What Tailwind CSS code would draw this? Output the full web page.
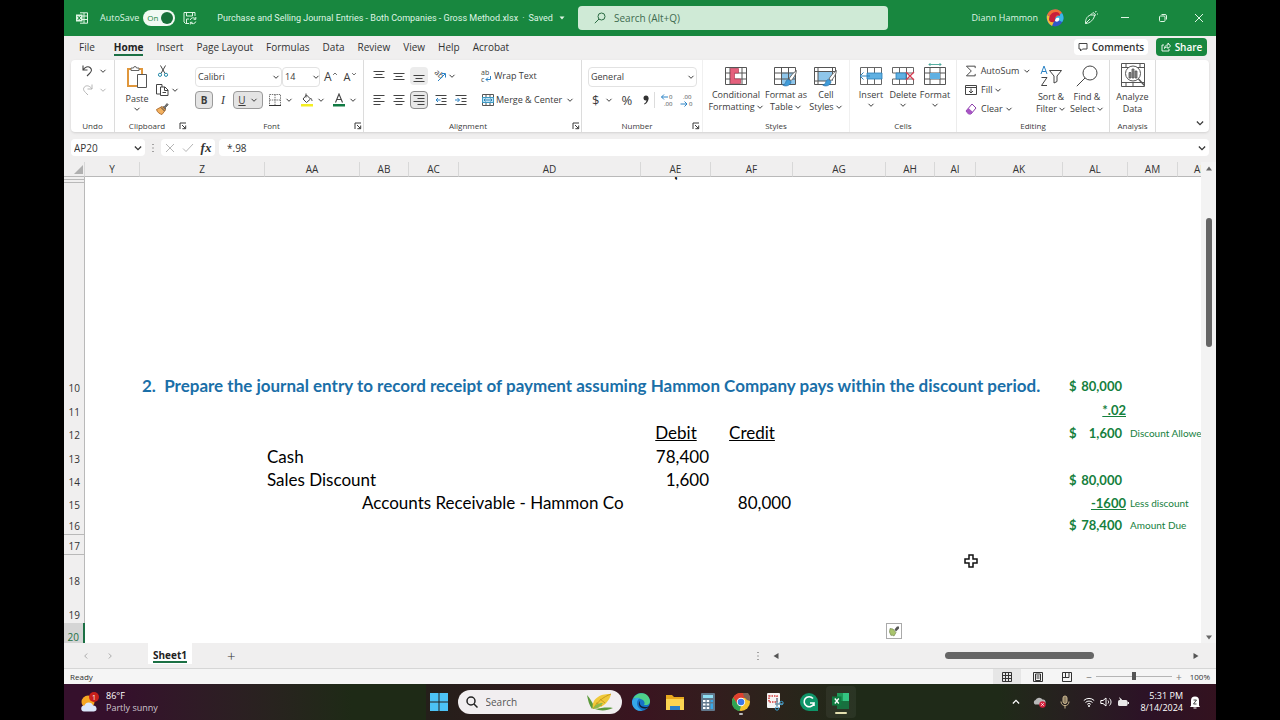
<!DOCTYPE html>
<html lang="en">
  <head>
    <meta charset="UTF-8" />
    <meta name="viewport" content="width=device-width, initial-scale=1.0" />
    <title>Purchase and Selling Journal Entries</title>
    <script src="https://cdn.jsdelivr.net/npm/@tailwindcss/browser@4"></script>
  </head>
  <body class="bg-black h-screen overflow-hidden font-['Open_Sans',sans-serif] text-[10px] leading-3 text-[#333]">
    <!-- Shared icons -->
    <svg class="hidden">
      <symbol id="chev" viewBox="0 0 8 8"><path d="M1.500 2.800 4 5.300 6.500 2.800" fill="none" stroke="currentColor" stroke-width="1" /></symbol>
      <symbol id="launch" viewBox="0 0 8 8"><path d="M1 7V1h6M3 3l3.500 3.500M6.700 3.500v3.200H3.400" fill="none" stroke="currentColor" stroke-width="1" /></symbol>
      <symbol id="brush" viewBox="0 0 14 16"><path d="M13.500.5c-3 2-6 6-7 8l2 1.500c2-2 5-6 5-9.500z" fill="#fff" stroke="#555" stroke-width=".8" /><path d="M6.200 9c-2 0-2.500 1.500-3 3C2.700 13.500 1.500 14 .5 14c2 1.800 7 1.500 8-3z" fill="#3f9bd8" stroke="#2a6fa8" stroke-width=".6" /></symbol>
    </svg>

    <div class="mx-auto w-[90%] h-full flex flex-col bg-[#f0efef]">
      <!-- Title bar -->
      <header class="h-9 shrink-0 flex items-center bg-[#18873f] text-[#dff5e4] text-[9px]">
        <div class="w-[514px] shrink-0 flex items-center pl-3">
          <svg class="w-3 h-3" viewBox="0 0 12 12" fill="none" stroke="#dff5e4">
            <path d="M4 .8h7.500v10.400H4M4 4h7.500M4 7.500h7.500M8 1v10" />
            <path d="M0 2.500h6.500v7H0z" fill="#dff5e4" stroke="none" />
            <path d="m1.700 4 3 4M4.700 4l-3 4" stroke="#18873f" />
          </svg>
          <label for="autosave" class="ml-3">AutoSave</label>
          <span class="relative ml-1 w-8 h-4 flex items-center">
            <input id="autosave" type="checkbox" checked class="appearance-none w-8 h-4 rounded-full bg-[#f1faf3]" />
            <span class="absolute left-1 text-[8px] text-[#18873f] pointer-events-none">On</span>
            <span class="absolute right-0.5 w-3 h-3 rounded-full bg-[#18703a] pointer-events-none"></span>
          </span>
          <button class="ml-2" aria-label="Save">
            <svg class="w-3.5 h-3.5" viewBox="0 0 14 14" fill="none" stroke="#dff5e4">
              <path d="M6 12.500H2.500l-1.500-1.500V1.500h11V5M3.500 1.500V5h6V1.500M3.500 12.500V8H6" />
              <path d="M7.200 9a3 3 0 0 1 5.300-1M12.800 6v2.300h-2.200M12.800 10.500a3 3 0 0 1-5.300 1M7.300 13.500v-2.200h2.200" />
            </svg>
          </button>
          <span class="ml-5 whitespace-nowrap font-['Roboto',sans-serif]">Purchase and Selling Journal Entries - Both Companies - Gross Method.xlsx</span>
          <button class="ml-1 flex items-center whitespace-nowrap font-['Roboto',sans-serif]">
            <span class="mr-1">·</span> Saved
            <svg class="w-1.5 h-1.5 ml-1.5" viewBox="0 0 6 6"><path d="M.5 1.500h5L3 4.500z" fill="#dff5e4" /></svg>
          </button>
        </div>
        <label class="w-[310px] shrink-0 h-6 rounded-sm bg-[#cfead6] flex items-center px-4 gap-2">
          <svg class="w-3 h-3" viewBox="0 0 12 12" fill="none" stroke="#2b6b43"><circle cx="7.500" cy="4.500" r="3.500" /><path d="M5 7 .8 11.200" /></svg>
          <input type="text" aria-label="Search" placeholder="Search (Alt+Q)" class="flex-1 bg-transparent outline-none text-[10px] placeholder:text-[#3f6b50]" />
        </label>
        <div class="flex-1 flex items-center justify-end pr-3">
          <span class="whitespace-nowrap">Diann Hammon</span>
          <svg class="w-[18px] h-[18px] ml-2" viewBox="0 0 18 18">
            <circle cx="9" cy="9" r="8.500" fill="#3157c8" />
            <path d="M1 6A8.500 8.500 0 0 1 16 4L9 9z" fill="#f0703a" />
            <path d="M1 6c-1 4 1 9 5 11l3-7z" fill="#f2c037" />
            <path d="M9 9 16 4c2 3 2 7 0 9z" fill="#39b7e8" />
            <path d="M3 11c0-5 3-8 7-8 3 0 4 2 4 4-3-2-5 0-5 4 0 3-5 3-6 0z" fill="#c8203c" />
            <path d="M9 12c0-3 2-4 4-3 1 2-1 5-4 3z" fill="#fff" />
          </svg>
          <button class="ml-5" aria-label="Ink">
            <svg class="w-3.5 h-3.5" viewBox="0 0 14 14" fill="none" stroke="#dff5e4"><path d="M1.500 12.500c0-4 1-7 5-8.500h4c0 4-4.500 8.500-9 8.500zM1.500 12.500 6 8M6.500 4 9 1.500l2.500 2L10.500 5.500M11 1l1.500-.5M13 3h1" /></svg>
          </button>
          <button class="ml-[22px]" aria-label="Minimize"><svg class="w-2.5 h-2.5" viewBox="0 0 10 10"><path d="M1 4.500h8" stroke="#dff5e4" /></svg></button>
          <button class="ml-7" aria-label="Restore"><svg class="w-2.5 h-2.5" viewBox="0 0 10 10" fill="none" stroke="#dff5e4"><rect x="1.500" y="3" width="5.500" height="5.500" rx="1" /><path d="M3.500 1.500H7A1.500 1.500 0 0 1 8.500 3v3.500" /></svg></button>
          <button class="ml-[26px]" aria-label="Close"><svg class="w-2.5 h-2.5" viewBox="0 0 10 10"><path d="m1 1 8 8M9 1 1 9" stroke="#dff5e4" /></svg></button>
        </div>
      </header>

      <!-- Ribbon tabs -->
      <nav class="h-6 shrink-0 flex items-center gap-[13px] pl-[15px] pr-[9px] pb-0.5 text-[#333]">
        <a href="#">File</a>
        <a href="#" class="ml-1.5 font-bold text-[#222] border-b-2 border-[#1c7044] -mb-0.5 pb-px">Home</a>
        <a href="#">Insert</a>
        <a href="#">Page Layout</a>
        <a href="#">Formulas</a>
        <a href="#">Data</a>
        <a href="#">Review</a>
        <a href="#">View</a>
        <a href="#">Help</a>
        <a href="#">Acrobat</a>
        <div class="ml-auto flex gap-2 font-semibold">
          <button class="h-4 w-[74px] rounded-sm bg-white flex items-center justify-center gap-1">
            <svg class="w-2.5 h-2.5" viewBox="0 0 10 10" fill="none" stroke="#444"><path d="M1 1.500h8v5.500H4.500L2.500 9V7H1z" /></svg>
            Comments
          </button>
          <button class="h-[18px] -my-px w-[51px] rounded-sm bg-[#18873f] text-white flex items-center justify-center gap-1">
            <svg class="w-2.5 h-2.5" viewBox="0 0 10 10" fill="none" stroke="#fff" stroke-width=".9"><path d="M3 3H1v6h7V7M3.500 6.500C3.500 4 5 3 7 3V1l2.500 3L7 6.500V5c-1.500 0-2.500 0-3.500 1.500z" /></svg>
            Share
          </button>
        </div>
      </nav>

      <!-- Ribbon -->
      <section class="mx-[7px] h-[72px] shrink-0 flex bg-white rounded-sm shadow-sm text-[9px] text-[#3b3b3b] *:shrink-0">
        <div class="w-[44px] flex flex-col border-r border-[#dcdcdc] pt-[3px]">
          <div class="flex-1 flex flex-col gap-[3px] pl-2.5">
            <button class="flex items-center gap-1 h-4" aria-label="Undo">
              <svg class="w-3.5 h-3.5" viewBox="0 0 14 14" fill="none" stroke="#444" stroke-width="1.100"><path d="M2 1.500V6h4.500M2 6c2-3 5-4 7-2.500 2.500 2 1.500 4-.5 6L6 12" /></svg>
              <svg class="w-2 h-2"><use href="#chev" /></svg>
            </button>
            <button class="flex items-center gap-1 h-4 text-[#b5b5b5]" aria-label="Redo">
              <svg class="w-3.5 h-3.5" viewBox="0 0 14 14" fill="none" stroke="currentColor"><path d="M11 1.500V6H6.500M11 6C9 3 6 2 4 3.500 1.500 5.500 2.500 7.500 4.500 9.500L7 12" /></svg>
              <svg class="w-2 h-2"><use href="#chev" /></svg>
            </button>
          </div>
          <div class="text-center text-[8px]">Undo</div>
        </div>

        <div class="w-[74px] flex flex-col pt-[3px]">
          <div class="flex-1 flex pl-2.5">
            <button class="w-6 flex flex-col items-center">
              <svg class="w-6 h-6 mt-0.5" viewBox="0 0 24 24" fill="none">
                <path d="M3 4h14v17H3z" fill="#fff" stroke="#e0973c" stroke-width="2" />
                <path d="M6 5.500V3h2.500a1.500 1.500 0 0 1 3 0H14v2.500z" fill="#fff" stroke="#666" />
                <path d="M12.500 9.500h9v13h-9z" fill="#fff" stroke="#555" />
              </svg>
              <span class="mt-1">Paste</span>
              <svg class="w-2 h-2"><use href="#chev" /></svg>
            </button>
            <div class="ml-1.5 flex flex-col gap-[3px]">
              <button class="h-4 pl-0.5" aria-label="Cut">
                <svg class="w-3 h-3" viewBox="0 0 12 12" fill="none"><path d="M3.500.5 8 8.500M8.500.5 4 8.500" stroke="#444" /><circle cx="3" cy="9.800" r="1.600" stroke="#2288a8" /><circle cx="9" cy="9.800" r="1.600" stroke="#2288a8" /></svg>
              </button>
              <button class="h-4 flex items-center gap-0.5" aria-label="Copy">
                <svg class="w-3.5 h-3.5" viewBox="0 0 14 14" fill="#fff" stroke="#444"><path d="M6 11H1.500V1.500H7V4" /><path d="M5.500 4h4.500l3 3v5.500H5.500zM9.500 4v3.500H13M7.500 9.500h3.500" /></svg>
                <svg class="w-2 h-2"><use href="#chev" /></svg>
              </button>
              <button class="h-4" aria-label="Format Painter">
                <svg class="w-3.5 h-3.5" viewBox="0 0 14 14"><path d="m7.500 5 2-.5L12 1.500l1.200 1.200L10.500 5.500l0 2z" fill="#777" stroke="#444" stroke-width=".7" /><path d="M7 4.500 10.500 8 7 12.500C4.500 12 2 10 1.500 7.500z" fill="#f3b15f" stroke="#a05a1c" stroke-width=".8" /><path d="M6 5.500 9.500 9" stroke="#444" /></svg>
              </button>
            </div>
          </div>
          <div class="flex items-center text-[8px] pr-0.5"><span class="flex-1 text-center">Clipboard</span><svg class="w-2 h-2"><use href="#launch" /></svg></div>
        </div>

        <div class="w-[175px] flex flex-col border-r border-[#dcdcdc] pt-[3px]">
          <div class="flex-1 flex flex-col gap-1 pl-1.5 pt-1">
            <div class="flex items-center">
              <div class="relative w-[87px] h-5">
                <select aria-label="Font" class="appearance-none w-full h-5 pl-0.5 rounded-sm border border-[#e2e2e2] leading-4"><option>Calibri</option></select>
                <svg class="absolute right-0.5 top-1.5 w-2 h-2 pointer-events-none"><use href="#chev" /></svg>
              </div>
              <div class="relative w-[38px] h-5">
                <select aria-label="Font size" class="appearance-none w-full h-5 pl-0.5 rounded-sm border border-[#e2e2e2] leading-4"><option>14</option></select>
                <svg class="absolute right-0 top-1.5 w-2 h-2 pointer-events-none"><use href="#chev" /></svg>
              </div>
              <button class="ml-1 flex text-[12px]" aria-label="Increase font size">A<svg class="w-1.5 h-1.5 rotate-180"><use href="#chev" /></svg></button>
              <button class="ml-1.5 flex text-[11px]" aria-label="Decrease font size">A<svg class="w-1.5 h-1.5"><use href="#chev" /></svg></button>
            </div>
            <div class="flex items-center h-[18px]">
              <button class="w-[18px] h-[18px] rounded-sm border border-[#9a9a9a] bg-[#e4e4e4] text-[10px] font-bold">B</button>
              <button class="w-5 italic font-['Liberation_Serif',serif] text-[12px]">I</button>
              <button class="w-[30px] h-[18px] rounded-sm border border-[#9a9a9a] bg-[#e4e4e4] flex items-center justify-center gap-1 text-[10px]"><span class="underline">U</span><svg class="w-2 h-2"><use href="#chev" /></svg></button>
              <button class="ml-1.5 flex items-center gap-1" aria-label="Borders">
                <svg class="w-3 h-3" viewBox="0 0 12 12" fill="none" stroke="#777"><path d="M.5.500h11v11H.5zM6 .5v11M.5 6h11" stroke-dasharray="1.500 .8" /><path d="M0 11.500h12" stroke="#333" /></svg>
                <svg class="w-2 h-2"><use href="#chev" /></svg>
              </button>
              <button class="ml-2 flex items-center gap-1" aria-label="Fill color">
                <svg class="w-3 h-3.5" viewBox="0 0 12 14"><path d="M5.500 2 9.500 6 5.500 9.500 2 6z" fill="#fff" stroke="#444" /><path d="M5 .5v4M9.500 5c1 1 1.500 2 1.500 3" stroke="#444" fill="none" /><path d="M0 11h12v2.500H0z" fill="#f4ee22" /></svg>
                <svg class="w-2 h-2"><use href="#chev" /></svg>
              </button>
              <button class="ml-2 flex items-center gap-1" aria-label="Font color">
                <svg class="w-3 h-3.5" viewBox="0 0 12 14" fill="none"><path d="M2.500 9.500 6 1l3.500 8.500M3.700 6.500h4.600" stroke="#444" stroke-width="1.100" /><path d="M0 11h12v2.500H0z" fill="#107a43" /></svg>
                <svg class="w-2 h-2"><use href="#chev" /></svg>
              </button>
            </div>
          </div>
          <div class="flex items-center text-[8px] pr-px"><span class="flex-1 text-center">Font</span><svg class="w-2 h-2"><use href="#launch" /></svg></div>
        </div>

        <div class="w-[218px] flex flex-col border-r border-[#dcdcdc] pt-[3px]">
          <div class="flex-1 flex flex-col gap-1.5 pl-1.5 pt-1">
            <div class="flex items-center h-[18px]">
              <button class="w-[18px] h-[18px] grid place-items-center" aria-label="Top align"><svg class="w-3 h-3" viewBox="0 0 12 12"><path d="M.5 1.500h11M2.500 4.500h7M.5 7.500h11" stroke="#444" /></svg></button>
              <button class="ml-0.5 w-[18px] h-[18px] grid place-items-center" aria-label="Middle align"><svg class="w-3 h-3" viewBox="0 0 12 12"><path d="M.5 3.500h11M2.500 6.500h7M.5 9.500h11" stroke="#444" /></svg></button>
              <button class="ml-0.5 w-[18px] h-[18px] grid place-items-center bg-[#ececec] rounded-sm" aria-label="Bottom align"><svg class="w-3 h-3" viewBox="0 0 12 12"><path d="M.5 5.500h11M2.500 8.500h7M.5 11.500h11" stroke="#444" /></svg></button>
              <button class="ml-1 flex items-center" aria-label="Orientation">
                <svg class="w-4 h-4" viewBox="0 0 16 16" fill="none"><text x="2" y="5" font-size="8" fill="#444" transform="rotate(42 2 5)">ab</text><path d="m6 13 7-7M9.500 5.500h4v4" stroke="#2b83c6" /></svg>
                <svg class="w-2 h-2"><use href="#chev" /></svg>
              </button>
              <button class="ml-6 flex items-center gap-0.5">
                <svg class="w-3 h-4" viewBox="0 0 12 16" fill="none"><text x="1" y="7" font-size="7" fill="#444">ab</text><text x="1" y="14" font-size="7" fill="#444">c</text><path d="M10.500 8v3.500H6M8 9.500l-2 2 2 2" stroke="#2b83c6" /></svg>
                Wrap Text
              </button>
            </div>
            <div class="flex items-center h-[18px]">
              <button class="w-[18px] h-[18px] grid place-items-center" aria-label="Align left"><svg class="w-3 h-3" viewBox="0 0 12 12"><path d="M.5 1.500h11M.5 4.500h7M.5 7.500h11M.5 10.500h7" stroke="#444" /></svg></button>
              <button class="ml-0.5 w-[18px] h-[18px] grid place-items-center" aria-label="Center"><svg class="w-3 h-3" viewBox="0 0 12 12"><path d="M.5 1.500h11M2.500 4.500h7M.5 7.500h11M2.500 10.500h7" stroke="#444" /></svg></button>
              <button class="ml-0.5 w-[18px] h-[18px] grid place-items-center rounded-sm border border-[#8a8a8a] bg-[#e8e8e8]" aria-label="Align right"><svg class="w-3 h-3" viewBox="0 0 12 12"><path d="M.5 1.500h11M4.500 4.500h7M.5 7.500h11M4.500 10.500h7" stroke="#444" /></svg></button>
              <button class="ml-1 w-[18px] h-[18px] grid place-items-center" aria-label="Decrease indent"><svg class="w-3 h-3" viewBox="0 0 12 12" fill="none"><path d="M.5 1.500h11M6.500 4.500h5M6.500 7.500h5M.5 10.500h11" stroke="#444" /><path d="M5.500 6H1M3 4 1 6l2 2" stroke="#2b83c6" /></svg></button>
              <button class="ml-0.5 w-[18px] h-[18px] grid place-items-center" aria-label="Increase indent"><svg class="w-3 h-3" viewBox="0 0 12 12" fill="none"><path d="M.5 1.500h11M6.500 4.500h5M6.500 7.500h5M.5 10.500h11" stroke="#444" /><path d="M0 6h4.500M2.500 4l2 2-2 2" stroke="#2b83c6" /></svg></button>
              <button class="ml-3 flex items-center gap-0.5 whitespace-nowrap">
                <svg class="w-3 h-3" viewBox="0 0 12 12" fill="none"><path d="M.5.500h11v11H.5zM4 .5v3M8 .5v3M4 9v3M8 9v3" stroke="#555" /><path d="M.5 3.500h11v5H.5z" fill="#bfe3f5" stroke="#3d9ac4" /><path d="M2 6h8M3.500 4.500 2 6l1.500 1.500M8.500 4.500 10 6 8.500 7.500" stroke="#1c74a8" stroke-width=".8" /></svg>
                Merge &amp; Center
                <svg class="ml-0.5 w-2 h-2"><use href="#chev" /></svg>
              </button>
            </div>
          </div>
          <div class="flex items-center text-[8px] pr-px"><span class="flex-1 text-center">Alignment</span><svg class="w-2 h-2"><use href="#launch" /></svg></div>
        </div>

        <div class="w-[120px] flex flex-col pt-[3px]">
          <div class="flex-1 flex flex-col gap-1 pl-1.5 pt-1">
            <div class="relative w-[109px] h-5">
              <select aria-label="Number format" class="appearance-none w-full h-5 pl-0.5 rounded-sm border border-[#e2e2e2] leading-4"><option>General</option></select>
              <svg class="absolute right-0.5 top-1.5 w-2 h-2 pointer-events-none"><use href="#chev" /></svg>
            </div>
            <div class="flex items-center h-[18px]">
              <button class="ml-1 flex items-center gap-1.5 text-[13px]">$<svg class="w-2 h-2"><use href="#chev" /></svg></button>
              <button class="ml-2 text-[13px]">%</button>
              <button class="ml-2.5" aria-label="Comma style"><svg class="w-2 h-2.5" viewBox="0 0 8 10"><circle cx="4" cy="3" r="2.500" fill="#333" /><path d="M6.500 3c0 3-1.500 5.500-4 6.500l-.5-.8C3.500 8 4.500 6.500 4.500 5z" fill="#333" /></svg></button>
              <span class="mx-1 w-px h-4 bg-[#dcdcdc]"></span>
              <button class="ml-px" aria-label="Increase decimal"><svg class="w-3.5 h-4" viewBox="0 0 14 16" fill="none"><text x="9" y="7" font-size="6" fill="#444">0</text><text x="4" y="14" font-size="6" fill="#444">.00</text><path d="M8 5H1.500M4 2.500 1.500 5 4 7.500" stroke="#2b83c6" /></svg></button>
              <button class="ml-1.5" aria-label="Decrease decimal"><svg class="w-3.5 h-4" viewBox="0 0 14 16" fill="none"><text x="3" y="7" font-size="6" fill="#444">.00</text><text x="9" y="14" font-size="6" fill="#444">0</text><path d="M.5 12h6.500M4.500 9.500 7 12l-2.500 2.500" stroke="#2b83c6" /></svg></button>
            </div>
          </div>
          <div class="flex items-center text-[8px] pr-0.5"><span class="flex-1 text-center">Number</span><svg class="w-2 h-2"><use href="#launch" /></svg></div>
        </div>

        <div class="w-[148px] flex flex-col border-x border-[#f0f0f0] pt-[3px]">
          <div class="flex-1 flex pt-1 pl-1.5 *:flex *:flex-col *:items-center *:whitespace-nowrap">
            <button class="w-[54px]">
              <svg class="w-[22px] h-[18px]" viewBox="0 0 22 18" fill="#fff"><path d="M.5.500h21v17H.5zM5 .5v17M17 .5v17M.5 6h21M.5 12h21" stroke="#555" /><path d="M5.500 1.500h8V6h-4v6h6v4.500h-10z" fill="#e5607c" stroke="#b83c58" stroke-width=".7" /></svg>
              <span class="mt-1">Conditional</span>
              <span class="flex items-center">Formatting<svg class="ml-px w-2 h-2"><use href="#chev" /></svg></span>
            </button>
            <button class="w-[46px]">
              <svg class="w-6 h-5 -mb-0.5" viewBox="0 0 24 20" fill="none"><path d="M.5.500h21v17H.5z" fill="#fff" /><path d="M7.500 5.500h14v12h-14z" fill="#8fc6ea" /><path d="M.5.500h21v17H.5zM7.500 .5v17M14.500 .5v17M.5 6h21M.5 12h21" stroke="#555" /><use href="#brush" x="8" y="3" width="15" height="17" /></svg>
              <span class="mt-1">Format as</span>
              <span class="flex items-center">Table<svg class="ml-px w-2 h-2"><use href="#chev" /></svg></span>
            </button>
            <button class="w-[34px]">
              <svg class="w-6 h-5 -mb-0.5" viewBox="0 0 24 20" fill="none"><path d="M.5.500h21v17H.5z" fill="#fff" stroke="#555" /><path d="M4 4.500h14.500v9.500H4z" fill="#8fc6ea" /><path d="M4 .5v17M18.500 .5v13M.5 4.500h21M.5 14h12" stroke="#555" /><use href="#brush" x="8" y="3" width="15" height="17" /></svg>
              <span class="mt-1">Cell</span>
              <span class="flex items-center">Styles<svg class="ml-px w-2 h-2"><use href="#chev" /></svg></span>
            </button>
          </div>
          <div class="text-center text-[8px]">Styles</div>
        </div>

        <div class="w-[107px] flex flex-col border-r border-[#ececec] pt-[3px]">
          <div class="flex-1 flex justify-center pt-1">
            <button class="w-8 flex flex-col items-center">
              <svg class="w-6 h-[18px]" viewBox="0 0 24 18" fill="none"><path d="M1.500.500h21v17h-21zM8.500 .5v17M15.500 .5v17" fill="#fff" stroke="#666" /><path d="M8 6h15v6H8z" fill="#5fb0e2" stroke="#2a7fb8" stroke-width=".8" /><path d="M11 9H1M4.500 5.500 1 9l3.500 3.500" stroke="#2a7fb8" /></svg>
              <span class="mt-1">Insert</span>
              <svg class="w-2 h-2"><use href="#chev" /></svg>
            </button>
            <button class="w-8 flex flex-col items-center">
              <svg class="w-6 h-[18px]" viewBox="0 0 24 18" fill="none"><path d="M1.500 6V.5h21V6M1.500 12v5.500h21V12M8.500 .5v17M15.500 .5v17M1.500 6h21M1.500 12h21" stroke="#666" /><path d="M5 6h10v6H5z" fill="#5fb0e2" stroke="#2a7fb8" stroke-width=".8" /><path d="m15 5 8 8M23 5l-8 8" stroke="#d8394f" stroke-width="1.200" /></svg>
              <span class="mt-1">Delete</span>
              <svg class="w-2 h-2"><use href="#chev" /></svg>
            </button>
            <button class="w-8 flex flex-col items-center whitespace-nowrap">
              <svg class="w-[22px] h-[22px] -mt-1" viewBox="0 0 22 22" fill="none"><path d="M.5 4.500h21v17H.5zM6 4.500v17M16 4.500v17M.5 10h21M.5 16h21" fill="#fff" stroke="#555" /><path d="M6 10h10v6H6z" fill="#5fb0e2" /><path d="M5 1.500h12M6.500 0 5 1.500 6.500 3M15.500 0 17 1.500 15.500 3" stroke="#2b9a8a" stroke-width=".8" /></svg>
              <span class="mt-1">Format</span>
              <svg class="w-2 h-2"><use href="#chev" /></svg>
            </button>
          </div>
          <div class="text-center text-[8px]">Cells</div>
        </div>

        <div class="w-[153px] flex flex-col border-r border-[#dcdcdc] pt-[3px]">
          <div class="flex-1 flex pl-2">
            <div class="w-[70px] flex flex-col gap-[3px] *:h-4 *:flex *:items-center *:gap-1">
              <button class="pr-1">
                <svg class="w-3 h-3" viewBox="0 0 12 12" fill="none" stroke="#444"><path d="M10.500 3V1H1.500l5 5-5 5h9V9" /></svg>
                AutoSum<svg class="ml-auto w-2 h-2"><use href="#chev" /></svg>
              </button>
              <button>
                <svg class="w-3 h-3" viewBox="0 0 12 12" fill="none" stroke="#444"><path d="M.5 1.500h11v9H.5zM.5 3.500h11M6 4.500v4.500M4 7l2 2 2-2" /></svg>
                Fill<svg class="w-2 h-2 -ml-0.5"><use href="#chev" /></svg>
              </button>
              <button>
                <svg class="w-3 h-3" viewBox="0 0 12 12"><path d="M7 1 11 5 6 11H3.500L1 8z" fill="#fff" stroke="#8a3ca8" /><path d="M3.500 5 7.800 9 6 11H3.500L1 8z" fill="#a755c4" /></svg>
                Clear<svg class="w-2 h-2 -ml-0.5"><use href="#chev" /></svg>
              </button>
            </div>
            <button class="w-8 flex flex-col items-center whitespace-nowrap">
              <svg class="w-[22px] h-[22px] mt-0.5" viewBox="0 0 22 22" fill="none"><path d="M1 9 4 1l3 8M2 6.500h4" stroke="#2b83c6" /><path d="M1.500 12.500H7l-5.500 8H7" stroke="#444" /><path d="M9.500 5.500h12l-4.500 5.500v5.500l-3 1.500v-7z" stroke="#444" /></svg>
              <span class="mt-1">Sort &amp;</span>
              <span class="flex items-center">Filter<svg class="ml-px w-2 h-2"><use href="#chev" /></svg></span>
            </button>
            <button class="ml-1 w-8 flex flex-col items-center whitespace-nowrap">
              <svg class="w-[22px] h-[22px] mt-0.5" viewBox="0 0 22 22" fill="none" stroke="#444"><circle cx="14" cy="8" r="7" /><path d="M9 13 .8 21.200" /></svg>
              <span class="mt-1">Find &amp;</span>
              <span class="flex items-center">Select<svg class="ml-px w-2 h-2"><use href="#chev" /></svg></span>
            </button>
          </div>
          <div class="text-center text-[8px]">Editing</div>
        </div>

        <div class="w-[46px] flex flex-col border-r border-[#dcdcdc] pt-[3px]">
          <button class="flex-1 flex flex-col items-center">
            <svg class="w-6 h-6" viewBox="0 0 24 24" fill="none" stroke="#555"><path d="M.5.500h23v23H.5zM.5 4.500h23M.5 19.500h23M5 19.500v4M12 19.500v4M5 .5v4M19 .5v4" /><circle cx="12" cy="10.500" r="7.500" fill="#fff" /><path d="m17.500 16 6 6.500" stroke-width="1.500" /><path d="M8 9.500h2V15H8zM11 6h2v9h-2zM14 8h2v7h-2z" fill="#888" stroke-width=".8" /></svg>
            <span class="mt-1">Analyze</span>
            <span>Data</span>
          </button>
          <div class="text-center text-[8px]">Analysis</div>
        </div>
        <div class="flex-1 flex items-end justify-end pb-1 pr-1"><button aria-label="Collapse ribbon"><svg class="w-2.5 h-2.5"><use href="#chev" /></svg></button></div>
      </section>

      <!-- Formula bar -->
      <div class="mt-[7px] ml-[7px] mr-[7px] h-[17px] shrink-0 flex items-center">
        <div class="relative w-[74px] h-full bg-white rounded-sm">
          <input aria-label="Name box" value="AP20" class="w-full h-full pl-[3px] outline-none text-[10px]" />
          <svg class="absolute right-0.5 top-1 w-2.5 h-2.5"><use href="#chev" /></svg>
        </div>
        <svg class="w-1 h-2.5 mx-1.5" viewBox="0 0 4 10"><path d="M2 1v1M2 4.500v1M2 8v1" stroke="#888" stroke-width="1.500" /></svg>
        <div class="w-[54px] h-full bg-white rounded-sm flex items-center justify-around mr-1">
          <button aria-label="Cancel"><svg class="w-2.5 h-2.5" viewBox="0 0 10 10"><path d="m1 1 8 8M9 1 1 9" stroke="#b5b5b5" /></svg></button>
          <button aria-label="Enter"><svg class="w-3 h-2.5" viewBox="0 0 12 10"><path d="m1 5.500 3 3L11 1" fill="none" stroke="#b5b5b5" /></svg></button>
          <button class="italic font-bold text-[13px] font-['Liberation_Serif',serif]">fx</button>
        </div>
        <div class="flex-1 h-full bg-white rounded-sm flex items-center pr-0.5">
          <input aria-label="Formula" value="*.98" class="flex-1 pl-2 outline-none text-[10px]" />
          <svg class="w-2.5 h-2.5"><use href="#chev" /></svg>
        </div>
      </div>

      <!-- Sheet -->
      <main class="mt-1.5 flex-1 min-h-0 flex">
        <div class="relative flex-1 min-w-0 overflow-hidden bg-white">
          <table class="table-fixed border-separate border-spacing-0 w-[1168px] whitespace-nowrap text-right text-[17px] leading-5 text-black font-['Lato',sans-serif] [&_td]:align-bottom [&_tbody_th]:align-bottom [&_tbody_th]:bg-[#f0efef] [&_tbody_th]:border-r [&_tbody_th]:border-[#b9b9b9] [&_tbody_th]:text-[10px] [&_tbody_th]:leading-4 [&_tbody_th]:font-normal [&_tbody_th]:text-[#333] [&_tbody_th]:pr-1 [&_tbody_th]:font-['Open_Sans',sans-serif]">
            <colgroup>
              <col class="w-[21px]" /><col class="w-[55px]" /><col class="w-[125px]" /><col class="w-[95px]" /><col class="w-[49px]" /><col class="w-[50px]" /><col class="w-[182px]" /><col class="w-[70px]" /><col class="w-[82px]" /><col class="w-[93px]" /><col class="w-[49px]" /><col class="w-[41px]" /><col class="w-[87px]" /><col class="w-[65px]" /><col class="w-[50px]" /><col class="w-[54px]" />
            </colgroup>
            <thead class="text-center text-[10px] leading-[14px] text-[#333] font-['Open_Sans',sans-serif]">
              <tr class="*:font-normal *:bg-[#f0efef] *:border-r *:border-b *:border-r-[#d8d8d8] *:border-b-[#b9b9b9]">
                <th><svg class="ml-2 w-3 h-3" viewBox="0 0 12 12"><path d="M11 2v9H2z" fill="#b0b0b0" /></svg></th>
                <th>Y</th><th>Z</th><th>AA</th><th>AB</th><th>AC</th><th>AD</th><th>AE</th><th>AF</th><th>AG</th><th>AH</th><th>AI</th><th>AK</th><th>AL</th><th>AM</th><th class="text-left"><span class="pl-4">AN</span></th>
              </tr>
            </thead>
            <tbody>
              <!-- Rows scrolled almost out of view -->
              <tr class="h-[3px]"><th class="border-b"></th><td colspan="6"></td><td><div class="h-[3px] overflow-hidden flex items-end justify-center leading-[14px]">,</div></td><td colspan="8"></td></tr>
              <tr class="h-[3px]"><th class="border-b"></th><td colspan="15"></td></tr>
              <tr class="h-[189px]"><th></th><td colspan="15"></td></tr>
              <tr class="h-6">
                <th>10</th><td></td>
                <td colspan="11" class="text-left pl-0.5 font-bold text-[#1a6fa8] whitespace-pre">2.  Prepare the journal entry to record receipt of payment assuming Hammon Company pays within the discount period.</td>
                <td class="px-1.5 font-bold text-[13px] text-[#15803d]"><div class="flex justify-between"><span>$</span><span>80,000</span></div></td><td></td><td></td>
              </tr>
              <tr class="h-6">
                <th>11</th><td colspan="12"></td>
                <td class="pr-0.5 font-bold text-[13px] text-[#15803d] underline">*.02</td><td></td><td></td>
              </tr>
              <tr class="h-[23px]">
                <th>12</th><td colspan="6"></td>
                <td class="text-center underline">Debit</td><td class="text-center underline">Credit</td><td colspan="4"></td>
                <td class="px-1.5 font-bold text-[13px] text-[#15803d]"><div class="flex justify-between"><span>$</span><span>1,600</span></div></td>
                <td colspan="2" class="pl-0.5 text-left text-[10px] text-[#15803d]">Discount Allowed</td>
              </tr>
              <tr class="h-6">
                <th>13</th><td colspan="2"></td><td class="pl-0.5 text-left">Cash</td><td colspan="3"></td>
                <td class="pr-0.5">78,400</td><td colspan="8"></td>
              </tr>
              <tr class="h-[23px]">
                <th>14</th><td colspan="2"></td><td colspan="2" class="pl-0.5 text-left">Sales Discount</td><td colspan="2"></td>
                <td class="pr-0.5">1,600</td><td colspan="5"></td>
                <td class="px-1.5 font-bold text-[13px] text-[#15803d]"><div class="flex justify-between"><span>$</span><span>80,000</span></div></td><td></td><td></td>
              </tr>
              <tr class="h-[23px]">
                <th>15</th><td colspan="3"></td><td colspan="3" class="pl-0.5 text-left">Accounts Receivable - Hammon Co</td><td></td>
                <td class="pr-0.5">80,000</td><td colspan="4"></td>
                <td class="pr-0.5 font-bold text-[13px] text-[#15803d] underline">-1600</td>
                <td colspan="2" class="pl-0.5 text-left text-[10px] text-[#15803d]">Less discount</td>
              </tr>
              <tr class="h-[22px]">
                <th class="border-b">16</th><td colspan="12"></td>
                <td class="px-1.5 font-bold text-[13px] text-[#15803d]"><div class="flex justify-between"><span>$</span><span>78,400</span></div></td>
                <td colspan="2" class="pl-0.5 text-left text-[10px] text-[#15803d]">Amount Due</td>
              </tr>
              <tr class="h-5"><th class="border-b">17</th><td colspan="15"></td></tr>
              <tr class="h-[34px]"><th>18</th><td colspan="15"></td></tr>
              <tr class="h-[34px]"><th>19</th><td colspan="15"></td></tr>
              <tr class="h-[22px] [&>th]:bg-[#d5d5d5]! [&>th]:text-[#1c7044]! [&>th]:border-r-2! [&>th]:border-[#1c7044]!"><th>20</th><td colspan="15"></td></tr>
            </tbody>
          </table>
          <!-- Paste options and cell pointer -->
          <button class="absolute left-[822px] bottom-1 w-4 h-4 bg-white border border-[#aaa] grid place-items-center" aria-label="Paste options">
            <svg class="w-3 h-3" viewBox="0 0 12 12"><path d="m6.500 4.500 2.500-3 2 0v2L8 6.500z" fill="#555" /><path d="M2 3.500 5 4l3 3.500-2 3.500-2-1-1 .5L1.500 7z" fill="#a9c46c" stroke="#6c7d48" stroke-width=".6" /></svg>
          </button>
          <svg class="absolute left-[900px] top-[392px] w-3.5 h-3.5" viewBox="0 0 14 14"><path d="M5 1h4v4h4v4H9v4H5V9H1V5h4z" fill="#fff" stroke="#111" stroke-width="1.500" /></svg>
        </div>
        <div class="w-[15px] shrink-0 flex flex-col items-center bg-[#f3f3f3]">
          <svg class="w-2 h-2 mt-0.5" viewBox="0 0 8 8"><path d="M1 6.500h6L4 2.500z" fill="#666" /></svg>
          <div class="mt-[46px] w-1.5 h-[129px] rounded-full bg-[#666]"></div>
          <svg class="w-2 h-2 mt-auto mb-px" viewBox="0 0 8 8"><path d="M1 1.500h6L4 5.500z" fill="#666" /></svg>
        </div>
      </main>

      <!-- Sheet tabs -->
      <div class="h-[26px] shrink-0 flex items-center border-b border-[#d6d6d6]">
        <button class="ml-[18px]" aria-label="Previous sheet"><svg class="w-2 h-2 rotate-90 text-[#aaa]"><use href="#chev" /></svg></button>
        <button class="ml-4" aria-label="Next sheet"><svg class="w-2 h-2 -rotate-90 text-[#aaa]"><use href="#chev" /></svg></button>
        <button class="ml-[34px] w-11 h-[21px] self-start pt-1 bg-white font-bold text-[#222]"><span class="inline-block border-b-2 border-[#1c7044]">Sheet1</span></button>
        <button class="ml-[35px] text-[15px] font-light" aria-label="New sheet">+</button>
        <svg class="ml-auto w-1 h-2.5" viewBox="0 0 4 10"><path d="M2 1v1M2 4.500v1M2 8v1" stroke="#888" stroke-width="1.500" /></svg>
        <svg class="ml-3 w-2 h-2" viewBox="0 0 8 8"><path d="M6.500 1v6L1.500 4z" fill="#555" /></svg>
        <div class="ml-[165px] w-[149px] h-[7px] rounded-full bg-[#666]"></div>
        <svg class="ml-[98px] mr-4 w-2 h-2" viewBox="0 0 8 8"><path d="M1.500 1v6L6.500 4z" fill="#555" /></svg>
      </div>

      <!-- Status bar -->
      <div class="h-[15px] shrink-0 flex items-center pl-1.5 pr-1.5 bg-[#f5f5f5] text-[8px]">
        <span>Ready</span>
        <button class="ml-auto w-7 h-full bg-[#e6e6e6] grid place-items-center" aria-label="Normal view"><svg class="w-2.5 h-2.5" viewBox="0 0 10 10" fill="none" stroke="#333"><path d="M.5.500h9v9h-9zM3.500 .5v9M6.500 .5v9M.5 3.500h9M.5 6.500h9" /></svg></button>
        <button class="w-[34px] grid place-items-center" aria-label="Page layout view"><svg class="w-2.5 h-2.5" viewBox="0 0 10 10" fill="none" stroke="#333"><path d="M.5.500h9v9h-9zM2.500 2h5v6.500h-5zM3.500 4h3M3.500 6h3" /></svg></button>
        <button class="w-6 grid place-items-center" aria-label="Page break view"><svg class="w-2.5 h-2.5" viewBox="0 0 10 10" fill="none" stroke="#333"><path d="M.5.500h9v9h-9zM3.500 .5v5M.5 5.500h6.500v-5" /></svg></button>
        <button class="ml-[7px] text-[10px] text-[#777]">−</button>
        <input type="range" aria-label="Zoom" value="50" class="mx-1 w-[76px] h-3 appearance-none bg-transparent [&::-webkit-slider-runnable-track]:h-px [&::-webkit-slider-runnable-track]:bg-[#b5b5b5] [&::-webkit-slider-thumb]:appearance-none [&::-webkit-slider-thumb]:w-1 [&::-webkit-slider-thumb]:h-2 [&::-webkit-slider-thumb]:-mt-1 [&::-webkit-slider-thumb]:bg-[#555]" />
        <button class="text-[10px] text-[#777]">+</button>
        <span class="ml-2">100%</span>
      </div>

      <!-- Taskbar -->
      <footer class="h-9 shrink-0 flex items-center text-white text-[9px] bg-linear-to-r from-[#35102c] from-5% via-[#1e2a16] via-25% to-[#1e2a16] to-30%">
        <div class="flex-1 h-full flex items-center pl-4 gap-1.5">
          <svg class="w-5 h-5" viewBox="0 0 20 20"><circle cx="8" cy="10" r="6.500" fill="#f5a623" /><path d="M4 19.500a3 3 0 0 1 .5-6 4.500 4.500 0 0 1 8.500 0 3 3 0 0 1 1 6z" fill="#dbe7fb" /><circle cx="14" cy="5" r="5" fill="#c8201c" /><text x="12" y="8" font-size="7" fill="#fff">1</text></svg>
          <div><p>86°F</p><p class="text-[#cfc6cf]">Partly sunny</p></div>
        </div>
        <div class="h-full flex items-center pl-1 bg-linear-to-r from-[#241f1a] via-[#3a1420] to-[#1f2a18]">
          <button aria-label="Start"><svg class="w-[18px] h-[18px]" viewBox="0 0 18 18" fill="#4cc2f5"><path d="M0 0h8.500v8.500H0zM9.500 0H18v8.500H9.500zM0 9.500h8.500V18H0zM9.500 9.500H18V18H9.500z" /></svg></button>
          <label class="ml-2.5 w-[164px] h-6 rounded-full bg-[#f1eef0] flex items-center px-2">
            <svg class="w-3 h-3" viewBox="0 0 12 12" fill="none" stroke="#222" stroke-width="1.500"><circle cx="5" cy="5" r="4" /><path d="m8 8 3.500 3.500" /></svg>
            <input type="text" aria-label="Taskbar search" placeholder="Search" class="ml-2 flex-1 min-w-0 bg-transparent outline-none text-[10px] placeholder:text-[#555]" />
            <svg class="w-7 h-[18px]" viewBox="0 0 28 18"><path d="M6 16C3 12 2 7 1 2c3 3 5 7 7 11zM9 16c6-1 12-2 18-1-6 3-13 3-18 1z" fill="#5c9a3c" /><path d="M7 16c-1-4 0-9 5-12 4-3 9-3 13-3-1 6-7 14-18 15z" fill="#f0c93a" /><path d="M7 16C11 9 17 4 25 1M10 10l6 3M14 6l5 4" stroke="#c99a1e" fill="none" /><path d="M7 16c4 0 8-3 10-6-5 0-8 2-10 6z" fill="#8cb84c" /></svg>
          </label>
          <button class="ml-2.5" aria-label="Edge"><svg class="w-[18px] h-[18px]" viewBox="0 0 18 18"><circle cx="9" cy="9" r="9" fill="#1673c8" /><path d="M1 6C3 1 8-.5 12 .5c4 1 6 5 6 8 0 3-3 4-6 3.500 1-1 1-4-2-5.500C7 5 3 5 1 6z" fill="#4fd08a" /><path d="M0 9c0-3 4-5 8-4-4 2-4 8 0 11 1 1 2 1.500 3 1.500C5 19 0 15 0 9z" fill="#35a8e8" /><path d="M8 8c-1 3 1 6 5 6 1 0 3 0 4-1-2 4-9 3-10-1-.5-2 0-3 1-4z" fill="#101f38" /></svg></button>
          <button class="ml-4" aria-label="File Explorer"><svg class="w-[18px] h-[18px]" viewBox="0 0 18 18"><path d="M0 2h6l2 2h10v13H0z" fill="#e8a91e" /><path d="M0 6h18v11H0z" fill="#fbd452" /><path d="M4 17v-4h10v4z" fill="#2a7fc8" /></svg></button>
          <button class="ml-4" aria-label="Calculator"><svg class="w-4 h-[18px]" viewBox="0 0 16 18"><rect x="1" width="14" height="18" rx="1" fill="#61788c" /><path d="M3 2h10v3H3z" fill="#8fe0f5" /><path d="M3 7h2.500v2H3zM6.700 7h2.500v2H6.700zM3 10.500h2.500v2H3zM6.700 10.500h2.500v2H6.700zM3 14h2.500v2H3zM6.700 14h2.500v2H6.700z" fill="#fff" /><path d="M10.500 7H13v2h-2.500zM10.500 10.500H13V16h-2.500z" fill="#39a8e8" /></svg></button>
          <button class="ml-4 flex flex-col items-center gap-0.5 pt-1" aria-label="Chrome"><svg class="w-[18px] h-[18px]" viewBox="0 0 18 18"><circle cx="9" cy="9" r="9" fill="#f4c22b" /><path d="M1.200 4.500A9 9 0 0 1 17 5H9L5 11z" fill="#e0402f" /><path d="M1.200 4.500 6 12l3 1-1.500 5C1 17-2 10 1.200 4.500z" fill="#2fa352" /><circle cx="9" cy="9" r="4.200" fill="#fff" /><circle cx="9" cy="9" r="3.300" fill="#3b78e7" /><path d="M11 0h5l2 3v5l-3-1-3-3z" fill="#7d6355" /></svg><span class="w-1 h-0.5 rounded bg-[#bbb]"></span></button>
          <button class="ml-4" aria-label="Snipping Tool"><svg class="w-[18px] h-[18px]" viewBox="0 0 18 18" fill="none"><rect x="1" y="0" width="13" height="15" rx="1" fill="#f4f4f4" /><path d="M3 3h8v6H3z" stroke="#d23c3c" stroke-dasharray="1.500 1" stroke-width="1.500" /><path d="M11 5v8M9 11h8" stroke="#6f8ea3" stroke-width="1.500" /><circle cx="11" cy="15.500" r="1.700" stroke="#3c9fd0" /><circle cx="15.500" cy="10" r="1.700" stroke="#3c9fd0" /></svg></button>
          <button class="ml-4" aria-label="Grammarly"><svg class="w-[18px] h-[18px]" viewBox="0 0 18 18"><path d="M9 0a9 9 0 0 1 9 9v9H9A9 9 0 0 1 9 0z" fill="#0e9468" /><path d="M13 5.500A5 5 0 1 0 14 10h-4M14 10v3" fill="none" stroke="#fff" stroke-width="1.600" /></svg></button>
          <button class="ml-2 w-[30px] h-8 rounded bg-white/5 flex flex-col items-center gap-0.5 pt-1.5" aria-label="Excel"><svg class="w-[18px] h-[18px]" viewBox="0 0 18 18"><path d="M5 1h12v16H5z" fill="#1f9a5a" /><path d="M11 1h6v8h-6z" fill="#34c481" /><path d="M5 9h12v8H5z" fill="#18703f" /><path d="M0 4.500h9.500v9H0z" fill="#0f7a3f" /><path d="m2.800 6.500 4 5M6.800 6.500l-4 5" stroke="#fff" stroke-width="1.300" /></svg><span class="w-3 h-0.5 rounded bg-[#e3dfb0]"></span></button>
        </div>
        <div class="flex-1 h-full flex items-center justify-end pr-[15px] bg-linear-to-r from-[#1f2a18] from-40% via-[#2c1226] via-80% to-[#33121f]">
          <button aria-label="Show hidden icons"><svg class="w-2.5 h-2.5 rotate-180"><use href="#chev" /></svg></button>
          <svg class="ml-3 w-3.5 h-3" viewBox="0 0 14 12"><path d="M2 8.500A2.500 2.500 0 0 1 2.500 4 4 4 0 0 1 9.500 3.500a2.500 2.500 0 0 1 1 5z" fill="#b8b8b8" /><circle cx="9.500" cy="8.500" r="3.200" fill="#d4203c" /><path d="m8.300 7.300 2.400 2.400M10.700 7.300 8.300 9.700" stroke="#fff" stroke-width=".9" /></svg>
          <svg class="ml-3 w-3 h-3.5" viewBox="0 0 12 14" fill="none" stroke="#c9b58e"><rect x="4" y="1" width="4" height="7.500" rx="2" fill="#8f8065" /><path d="M2 6.500C2 12 10 12 10 6.500M6 10.500v3" /></svg>
          <button class="ml-3 flex items-center gap-[5px]" aria-label="Network, sound and battery">
            <svg class="w-3 h-3" viewBox="0 0 12 12" fill="none" stroke="#fff"><path d="M.8 4.500a7.500 7.500 0 0 1 10.400 0M2.500 6.500a5 5 0 0 1 7 0M4.200 8.300a2.500 2.500 0 0 1 3.600 0" /><circle cx="6" cy="10" r=".6" fill="#fff" /></svg>
            <svg class="w-3 h-3" viewBox="0 0 12 12" fill="none" stroke="#fff"><path d="M.8 4.500H3L6 2v8L3 7.500H.8zM8 4.500c.8 1 .8 2 0 3M9.500 2.500c2 2 2 5 0 7" /></svg>
            <svg class="w-3 h-3" viewBox="0 0 12 12"><rect x="1" y="4" width="9.500" height="6" rx="1.500" fill="#e8e8e8" /><path d="M10.500 6H12v2h-1.500zM2 1l3 2.500-1 3z" fill="#e8e8e8" /></svg>
          </button>
          <div class="ml-3 w-[42px] flex flex-col items-end whitespace-nowrap"><p>5:31 PM</p><p>8/14/2024</p></div>
          <svg class="ml-1.5 w-3 h-3.5" viewBox="0 0 12 14"><path d="M2 10.500V5.500a4 4 0 0 1 8 0v5l1 1.500H1zM4.500 12.500h3v1h-3z" fill="#fff" /><path d="M4.500 5h3l-3 4h3" fill="none" stroke="#333" stroke-width=".9" /></svg>
        </div>
      </footer>
    </div>
  </body>
</html>
